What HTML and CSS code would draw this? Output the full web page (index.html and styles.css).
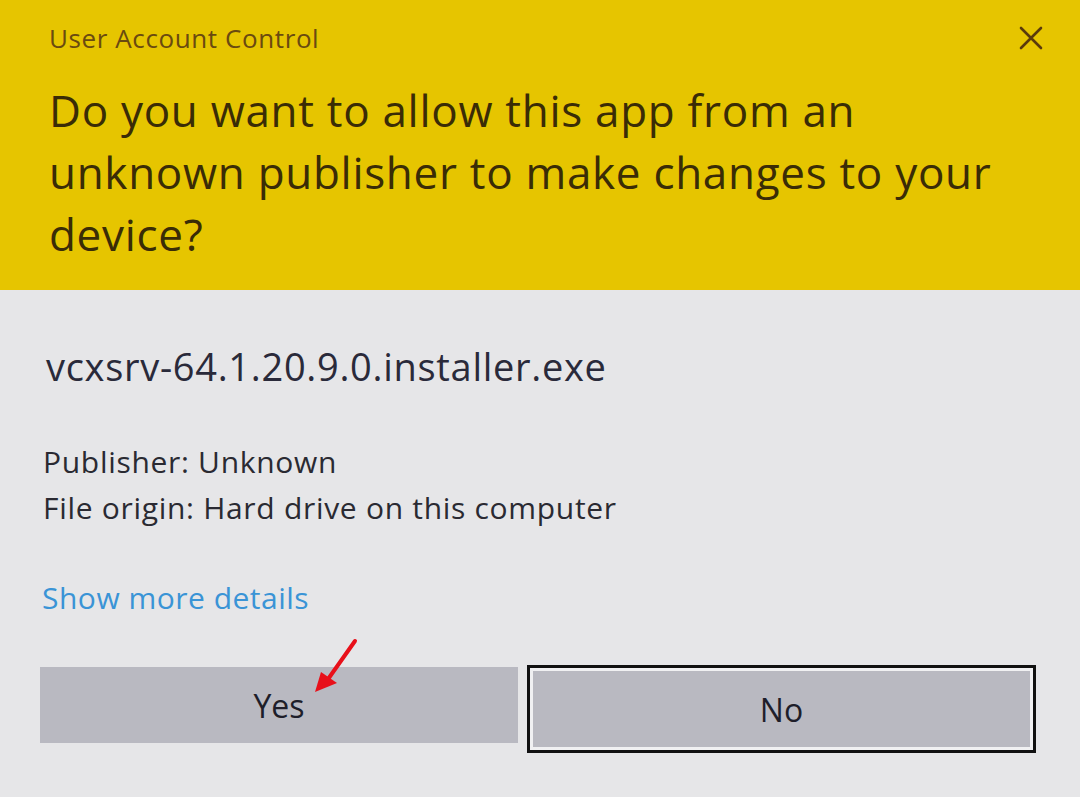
FILE: index.html
```html
<!DOCTYPE html>
<html lang="en">
<head>
<meta charset="utf-8">
<title>User Account Control</title>
<link rel="stylesheet" href="styles.css">
</head>
<body>
<div class="dialog">
  <div class="header">
    <div class="titlebar">
      <span class="title">User Account Control</span>
      <svg class="close" width="26" height="26" viewBox="0 0 26 26"><path d="M3 3 L23 23 M23 3 L3 23" stroke="#5a3a0c" stroke-width="2.6" stroke-linecap="round"/></svg>
    </div>
    <div class="question">Do you want to allow this app from an unknown publisher to make changes to your device?</div>
  </div>
  <div class="body">
    <div class="filename">vcxsrv-64.1.20.9.0.installer.exe</div>
    <div class="meta">
      <div>Publisher: Unknown</div>
      <div>File origin: Hard drive on this computer</div>
    </div>
    <div class="details">Show more details</div>
    <div class="buttons">
      <div class="btn yes">Yes</div>
      <div class="btn no">No</div>
    </div>
  </div>
  <svg class="arrow" width="60" height="70" viewBox="0 0 60 70"><path d="M45 3 L16 44" stroke="#e8101a" stroke-width="4" stroke-linecap="round"/><path d="M5 54 L11 34 L27 45 Z" fill="#e8101a"/></svg>
</div>
</body>
</html>
```
FILE: styles.css
```css
html, body {
  margin: 0;
  padding: 0;
}
body {
  width: 1080px;
  height: 797px;
  overflow: hidden;
  background: #e6e6e8;
  font-family: "Open Sans", "Noto Sans", "Liberation Sans", sans-serif;
}
.dialog {
  position: relative;
  width: 1080px;
  height: 797px;
  display: flex;
  flex-direction: column;
}
.header {
  background: #e6c500;
  height: 290px;
  box-sizing: border-box;
  padding: 20px 34px 0 49px;
}
.titlebar {
  display: flex;
  justify-content: space-between;
  align-items: center;
  height: 36px;
}
.title {
  font-size: 26px;
  color: #6a4a10;
  letter-spacing: 0.6px;
}
.close {
  margin-right: 2px;
}
.question {
  margin-top: 23px;
  font-size: 44px;
  line-height: 62px;
  letter-spacing: 0.7px;
  color: #3a2c06;
  width: 960px;
}
.body {
  flex: 1;
  background: #e6e6e8;
  padding: 54px 44px 0 43px;
  display: flex;
  flex-direction: column;
}
.filename {
  font-size: 38px;
  line-height: 44px;
  letter-spacing: 0.7px;
  color: #2a2a3a;
  margin-left: 3px;
}
.meta {
  margin-top: 51px;
  font-size: 30px;
  line-height: 46px;
  letter-spacing: 0.7px;
  color: #2a2a32;
}
.details {
  margin-top: 44px;
  margin-left: -1px;
  font-size: 30px;
  line-height: 46px;
  letter-spacing: 0.5px;
  color: #3a94d6;
}
.buttons {
  margin-top: 44px;
  margin-left: -3px;
  display: flex;
  align-items: flex-start;
  gap: 9px;
}
.btn {
  display: flex;
  align-items: center;
  justify-content: center;
  font-size: 32px;
  color: #1e1e2a;
  background: #b9b9c1;
  box-sizing: border-box;
}
.yes {
  width: 478px;
  height: 76px;
  margin-top: 2px;
}
.no {
  width: 509px;
  height: 88px;
  border: 3px solid #111;
  box-shadow: inset 0 0 0 3px #f0f0f2;
}
.arrow {
  position: absolute;
  left: 310px;
  top: 638px;
}
```
